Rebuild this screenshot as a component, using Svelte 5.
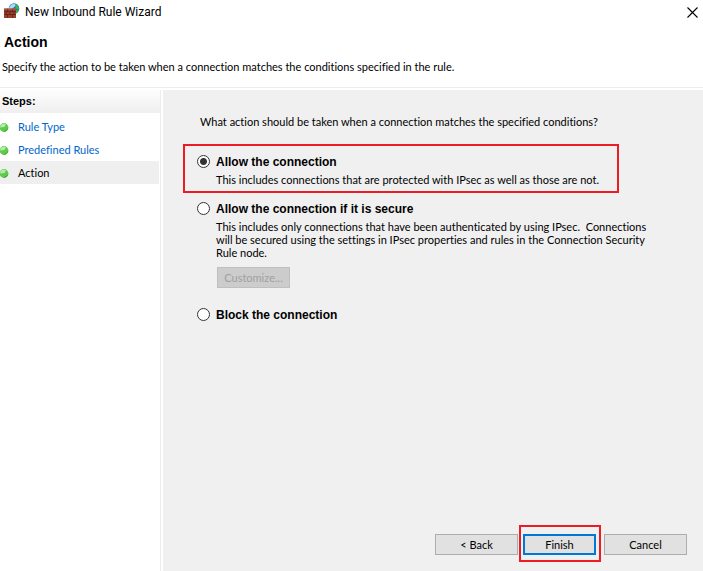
<script>
  const steps = ["Rule Type", "Predefined Rules", "Action"];
  let currentStep = "Action";
  let selectedAction = "allow";

  const actions = [
    {
      id: "allow",
      label: "Allow the connection",
      description:
        "This includes connections that are protected with IPsec as well as those are not.",
      highlight: true,
    },
    {
      id: "secure",
      label: "Allow the connection if it is secure",
      description:
        "This includes only connections that have been authenticated by using IPsec.\u00a0 Connections will be secured using the settings in IPsec properties and rules in the Connection Security Rule node.",
      customize: true,
    },
    { id: "block", label: "Block the connection" },
  ];
</script>

<div class="window">
  <div class="titlebar">
    <svg class="app-icon" viewBox="0 0 16 16" aria-hidden="true">
      <circle cx="10" cy="5.5" r="5.3" fill="#2673cf" />
      <path d="M5.5 3.5 Q7.5 0.5 10.5 0.8 L12 2.5 L10 4 L8.5 6 L5 6Z" fill="#a5dcf7" />
      <path d="M11 0.8 L14 2.5 L15.2 5.5 L13 6.5 L11.5 4Z M12 7.5 L15 7 L13.5 9.8 L12 10.5Z" fill="#3fb83a" />
      <rect x="0" y="5.5" width="12" height="9.5" fill="#963f2b" />
      <path
        d="M0 8.5H12M0 11.5H12M3.5 5.5V8.5M8.5 5.5V8.5M2 8.5V11.5M6 8.5V11.5M10 8.5V11.5M3.5 11.5V15M8.5 11.5V15"
        stroke="#5e2419"
        stroke-width="0.8"
      />
      <path d="M0 6H12" stroke="#c0705a" stroke-width="0.8" />
    </svg>
    <span class="title">New Inbound Rule Wizard</span>
    <button class="close" aria-label="Close">
      <svg viewBox="0 0 11 11" aria-hidden="true">
        <path d="M0.5 0.5L10.5 10.5M10.5 0.5L0.5 10.5" stroke="#000" stroke-width="1.1" />
      </svg>
    </button>
  </div>

  <header>
    <h1>Action</h1>
    <p>Specify the action to be taken when a connection matches the conditions specified in the rule.</p>
  </header>

  <div class="body">
    <nav>
      <h2>Steps:</h2>
      <ul>
        {#each steps as step}
          <li class:current={step === currentStep}>
            <svg class="bullet" viewBox="0 0 9 9" aria-hidden="true">
              <circle cx="4" cy="4.5" r="4.4" fill="#5fcb4d" />
              <path d="M0 4.5 A4 4 0 0 1 6 1 L4.5 4Z" fill="#b4ebaa" />
              <path d="M8.3 4.5 A4.2 4.2 0 0 1 3 8.6 L6.5 6.8Z" fill="#3fa836" />
            </svg>
            {#if step === currentStep}
              <span>{step}</span>
            {:else}
              <a href="#top">{step}</a>
            {/if}
          </li>
        {/each}
      </ul>
    </nav>

    <main>
      <p class="question">
        What action should be taken when a connection matches the specified conditions?
      </p>

      {#each actions as action}
        <div class="option" class:highlight={action.highlight}>
          <label>
            <input type="radio" name="action" value={action.id} bind:group={selectedAction} />
            {action.label}
          </label>
          {#if action.description}
            <p>{action.description}</p>
          {/if}
          {#if action.customize}
            <button class="customize" disabled>Customize...</button>
          {/if}
        </div>
      {/each}

      <footer>
        <button class="nav-button">&lt; Back</button>
        <div class="finish-box">
          <button class="finish">Finish</button>
        </div>
        <button class="nav-button">Cancel</button>
      </footer>
    </main>
  </div>
</div>

<style>
  :global(body) {
    margin: 0;
  }

  .window {
    display: flex;
    flex-direction: column;
    min-height: 100vh;
    background-color: #fff;
    color: #000;
    font-family: Lato, "Liberation Sans", Arial, sans-serif;
    font-size: 11px;
    font-variant-ligatures: none;
    line-height: 13px;
  }

  p,
  h1,
  h2,
  ul {
    margin: 0;
    padding: 0;
  }

  button {
    box-sizing: border-box;
    height: 21px;
    padding: 0;
    border: 1px solid #adadad;
    background-color: #e1e1e1;
    color: #000;
    font: inherit;
    font-variant-ligatures: none;
  }

  .titlebar {
    display: flex;
    align-items: center;
    height: 24px;
    padding: 0 5px 0 4px;
  }

  .app-icon {
    width: 16px;
    height: 16px;
    margin-bottom: 2px;
  }

  .title {
    flex: 1;
    margin-left: 5px;
    font-family: Roboto, "Noto Sans", sans-serif;
    font-size: 12px;
    line-height: 16px;
  }

  .close {
    border: none;
    background: none;
  }

  .close svg {
    display: block;
    width: 11px;
    height: 11px;
  }

  header {
    padding: 10px 2px 14px;
    border-bottom: 1px solid #ececec;
  }

  h1 {
    padding-left: 2px;
    font-family: "Liberation Sans", Arial, sans-serif;
    font-size: 14px;
    line-height: 16px;
  }

  header p {
    margin-top: 10px;
  }

  .body {
    display: flex;
    flex: 1;
    padding-top: 2px;
  }

  nav {
    box-sizing: border-box;
    flex: 0 0 161px;
    margin-right: 2px;
    border-right: 1px solid #ececec;
  }

  h2 {
    padding: 5px 2px;
    background: linear-gradient(#fdfdfd, #efefef);
    font-family: "Liberation Sans", Arial, sans-serif;
    font-size: 11px;
    line-height: 13px;
  }

  ul {
    margin-top: 2px;
    list-style: none;
  }

  li {
    display: flex;
    align-items: center;
    height: 23px;
    margin-right: 1px;
  }

  li.current {
    background-color: #efefef;
  }

  .bullet {
    width: 9px;
    height: 9px;
    margin: 1px 9px 0 0;
  }

  a {
    color: #0066cc;
    text-decoration: none;
  }

  main {
    display: flex;
    flex: 1;
    flex-direction: column;
    padding: 25px 16px 9px 20px;
    background-color: #f0f0f0;
  }

  .question {
    margin: 0 0 16px 17px;
  }

  .option {
    padding: 8px 36px 11px 14px;
  }

  .option.highlight {
    margin-right: 68px;
    padding: 8px 0 5px 12px;
    border: 2px solid #ed1c24;
  }

  label {
    display: flex;
    align-items: center;
    font-family: "Liberation Sans", Arial, sans-serif;
    font-size: 12px;
    font-weight: bold;
    line-height: 16px;
  }

  input {
    appearance: none;
    width: 13px;
    height: 13px;
    margin: 0 6px 1px 0;
    border: 1px solid #333;
    border-radius: 50%;
    background-color: #fff;
  }

  input:checked {
    background-image: radial-gradient(circle, #333 3px, transparent 4px);
  }

  .option p {
    margin: 3px 0 0 19px;
  }

  .customize {
    width: 73px;
    margin: 8px 0 0 20px;
    border-color: #bfbfbf;
    background-color: #ccc;
    color: #a0a0a0;
  }

  footer {
    display: flex;
    align-items: flex-end;
    justify-content: flex-end;
    margin-top: auto;
  }

  .nav-button {
    width: 83px;
    margin-bottom: 7px;
  }

  .finish-box {
    margin: 0 3px 0 1px;
    padding: 7px 3px 5px 2px;
    border: 2px solid #ed1c24;
  }

  .finish {
    display: block;
    width: 73px;
    border: 2px solid #0078d7;
  }
</style>
